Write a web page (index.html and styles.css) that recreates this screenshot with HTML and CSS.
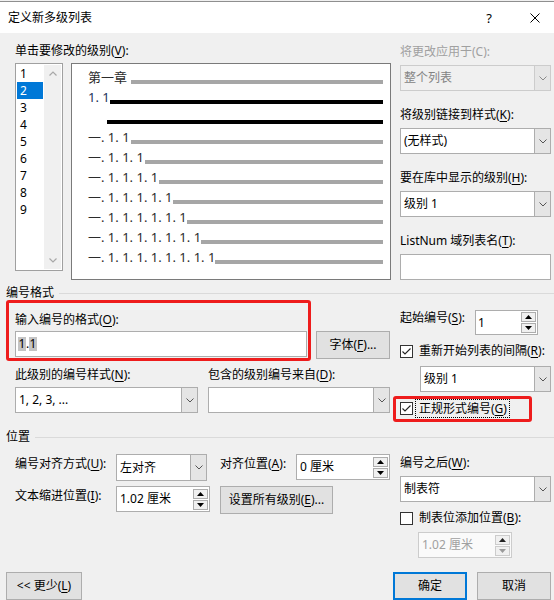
FILE: index.html
```html
<!DOCTYPE html>
<html lang="zh-CN">
<head>
<meta charset="utf-8">
<title>定义新多级列表</title>
<link rel="stylesheet" href="styles.css">
</head>
<body>
<div class="dialog">
  <header class="titlebar">
    <span class="title">定义新多级列表</span>
    <span class="help">?</span>
    <svg class="close" width="10" height="10" viewBox="0 0 10 10"><path d="M0.5 0.5 L9.5 9.5 M9.5 0.5 L0.5 9.5" stroke="#000" stroke-width="1" fill="none"/></svg>
  </header>

  <section class="top">
    <div class="levels">
      <div class="lbl lbl-top">单击要修改的级别(<u>V</u>):</div>
      <div class="levels-row">
        <div class="levellist">
          <ul class="items">
            <li>1</li><li class="sel">2</li><li>3</li><li>4</li><li>5</li><li>6</li><li>7</li><li>8</li><li>9</li>
          </ul>
          <div class="vscroll">
            <span class="arr"><svg width="8" height="5" viewBox="0 0 8 5"><polyline points="0.5,4.5 4,1 7.5,4.5" fill="none" stroke="#a8a8a8" stroke-width="1.2"/></svg></span>
            <span class="arr"><svg width="8" height="5" viewBox="0 0 8 5"><polyline points="0.5,0.5 4,4 7.5,0.5" fill="none" stroke="#a8a8a8" stroke-width="1.2"/></svg></span>
          </div>
        </div>
        <div class="preview">
          <div class="pv-row"><span class="pv-text w1">第一章</span><span class="bar"></span></div>
          <div class="pv-row"><span class="pv-text w2 cur">1. 1</span><span class="bar dark"></span></div>
          <div class="pv-row"><span class="pv-text w2b"></span><span class="bar dark"></span></div>
          <div class="pv-row"><span class="pv-text w3">一. 1. 1</span><span class="bar"></span></div>
          <div class="pv-row"><span class="pv-text w4">一. 1. 1. 1</span><span class="bar"></span></div>
          <div class="pv-row"><span class="pv-text w5">一. 1. 1. 1. 1</span><span class="bar"></span></div>
          <div class="pv-row"><span class="pv-text w6">一. 1. 1. 1. 1. 1</span><span class="bar"></span></div>
          <div class="pv-row"><span class="pv-text w7">一. 1. 1. 1. 1. 1. 1</span><span class="bar"></span></div>
          <div class="pv-row"><span class="pv-text w8">一. 1. 1. 1. 1. 1. 1. 1</span><span class="bar"></span></div>
          <div class="pv-row"><span class="pv-text w9">一. 1. 1. 1. 1. 1. 1. 1. 1</span><span class="bar"></span></div>
        </div>
      </div>
    </div>

    <div class="side">
      <div class="field">
        <div class="lbl disabled">将更改应用于(C):</div>
        <div class="combo disabled"><span class="val">整个列表</span><span class="drop"><svg width="8" height="5" viewBox="0 0 8 5"><polyline points="0.5,0.5 4,4 7.5,0.5" fill="none" stroke="#8a8a8a" stroke-width="1"/></svg></span></div>
      </div>
      <div class="field">
        <div class="lbl">将级别链接到样式(<u>K</u>):</div>
        <div class="combo"><span class="val">(无样式)</span><span class="drop"><svg width="8" height="5" viewBox="0 0 8 5"><polyline points="0.5,0.5 4,4 7.5,0.5" fill="none" stroke="#555" stroke-width="1"/></svg></span></div>
      </div>
      <div class="field">
        <div class="lbl">要在库中显示的级别(<u>H</u>):</div>
        <div class="combo"><span class="val">级别 1</span><span class="drop"><svg width="8" height="5" viewBox="0 0 8 5"><polyline points="0.5,0.5 4,4 7.5,0.5" fill="none" stroke="#555" stroke-width="1"/></svg></span></div>
      </div>
      <div class="field">
        <div class="lbl">ListNum 域列表名(<u>T</u>):</div>
        <div class="edit"></div>
      </div>
    </div>
  </section>

  <div class="group-title first"><span>编号格式</span></div>

  <section class="format">
    <div class="fmt-left">
      <div class="lbl lbl-fmt">输入编号的格式(<u>O</u>):</div>
      <div class="fmt-input-row">
        <div class="edit fmt-edit"><span class="fld">1</span>.<span class="fld">1</span></div>
        <button class="btn font-btn">字体(<u>F</u>)...</button>
      </div>
      <div class="fmt-combos">
        <div class="fc fc-1">
          <div class="lbl lbl-fc">此级别的编号样式(<u>N</u>):</div>
          <div class="combo"><span class="val">1, 2, 3, ...</span><span class="drop"><svg width="8" height="5" viewBox="0 0 8 5"><polyline points="0.5,0.5 4,4 7.5,0.5" fill="none" stroke="#555" stroke-width="1"/></svg></span></div>
        </div>
        <div class="fc fc-2">
          <div class="lbl lbl-fc">包含的级别编号来自(<u>D</u>):</div>
          <div class="combo"><span class="val"></span><span class="drop"><svg width="8" height="5" viewBox="0 0 8 5"><polyline points="0.5,0.5 4,4 7.5,0.5" fill="none" stroke="#555" stroke-width="1"/></svg></span></div>
        </div>
      </div>
    </div>

    <div class="fmt-right">
      <div class="start-row">
        <span class="lbl start-lbl">起始编号(<u>S</u>):</span>
        <div class="spin start-spin">
          <span class="val">1</span>
          <span class="btns">
            <span class="sb"><svg width="7" height="4" viewBox="0 0 7 4"><polygon points="0,4 3.5,0 7,4" fill="#000"/></svg></span>
            <span class="sb"><svg width="7" height="4" viewBox="0 0 7 4"><polygon points="0,0 7,0 3.5,4" fill="#000"/></svg></span>
          </span>
        </div>
      </div>
      <div class="check restart">
        <span class="box"><svg width="11" height="11" viewBox="0 0 11 11"><polyline points="1.5,5.5 4,8 9.5,2.5" fill="none" stroke="#222" stroke-width="1.1"/></svg></span>
        <span>重新开始列表的间隔(<u>R</u>):</span>
      </div>
      <div class="combo restart-combo"><span class="val">级别 1</span><span class="drop"><svg width="8" height="5" viewBox="0 0 8 5"><polyline points="0.5,0.5 4,4 7.5,0.5" fill="none" stroke="#555" stroke-width="1"/></svg></span></div>
      <div class="check legal">
        <span class="box"><svg width="11" height="11" viewBox="0 0 11 11"><polyline points="1.5,5.5 4,8 9.5,2.5" fill="none" stroke="#222" stroke-width="1.1"/></svg></span>
        <span class="focus">正规形式编号(<u>G</u>)</span>
      </div>
    </div>
  </section>

  <div class="group-title"><span>位置</span></div>

  <section class="position">
    <div class="pos-left">
      <span class="lbl pl">编号对齐方式(<u>U</u>):</span>
      <div class="combo align-combo"><span class="val">左对齐</span><span class="drop"><svg width="8" height="5" viewBox="0 0 8 5"><polyline points="0.5,0.5 4,4 7.5,0.5" fill="none" stroke="#555" stroke-width="1"/></svg></span></div>
      <span class="lbl pl c4">对齐位置(<u>A</u>):</span>
      <div class="spin c5">
        <span class="val">0 厘米</span>
        <span class="btns">
          <span class="sb"><svg width="7" height="4" viewBox="0 0 7 4"><polygon points="0,4 3.5,0 7,4" fill="#000"/></svg></span>
          <span class="sb"><svg width="7" height="4" viewBox="0 0 7 4"><polygon points="0,0 7,0 3.5,4" fill="#000"/></svg></span>
        </span>
      </div>
      <span class="lbl pl">文本缩进位置(<u>I</u>):</span>
      <div class="spin">
        <span class="val">1.02 厘米</span>
        <span class="btns">
          <span class="sb"><svg width="7" height="4" viewBox="0 0 7 4"><polygon points="0,4 3.5,0 7,4" fill="#000"/></svg></span>
          <span class="sb"><svg width="7" height="4" viewBox="0 0 7 4"><polygon points="0,0 7,0 3.5,4" fill="#000"/></svg></span>
        </span>
      </div>
      <button class="btn setall">设置所有级别(<u>E</u>)...</button>
    </div>

    <div class="pos-right">
      <div class="lbl lbl-after">编号之后(<u>W</u>):</div>
      <div class="combo"><span class="val">制表符</span><span class="drop"><svg width="8" height="5" viewBox="0 0 8 5"><polyline points="0.5,0.5 4,4 7.5,0.5" fill="none" stroke="#555" stroke-width="1"/></svg></span></div>
      <div class="check tabpos">
        <span class="box"></span>
        <span>制表位添加位置(<u>B</u>):</span>
      </div>
      <div class="spin disabled tab-spin">
        <span class="val">1.02 厘米</span>
        <span class="btns">
          <span class="sb"><svg width="7" height="4" viewBox="0 0 7 4"><polygon points="0,4 3.5,0 7,4" fill="#222"/></svg></span>
          <span class="sb"><svg width="7" height="4" viewBox="0 0 7 4"><polygon points="0,0 7,0 3.5,4" fill="#9a9a9a"/></svg></span>
        </span>
      </div>
    </div>
  </section>

  <footer class="buttons">
    <button class="btn more">&lt;&lt; 更少(<u>L</u>)</button>
    <button class="btn ok">确定</button>
    <button class="btn cancel">取消</button>
  </footer>

  <div class="mark mark-format"></div>
  <div class="mark mark-legal"></div>
</div>
</body>
</html>
```

FILE: styles.css
```css
* { box-sizing: border-box; }
html, body { margin: 0; padding: 0; }
body {
  background: #f0f0f0;
  font-family: "Noto Sans", "Noto Sans CJK SC", sans-serif;
  font-size: 12px;
  line-height: 16px;
  color: #000;
}
u { text-decoration: underline; text-underline-offset: 2px; }

.dialog {
  position: relative;
  width: 554px;
  height: 600px;
  overflow: hidden;
  background: #f0f0f0;
}

/* title bar */
.titlebar {
  display: flex;
  align-items: center;
  height: 32px;
  margin-top: 1px;
  border-top: 1px solid #8f8f8f;
  background: #fff;
}
.title { flex: 1; padding-left: 8px; }
.help { width: 40px; text-align: center; font-size: 13px; }
.close { display: block; margin-left: 21px; margin-right: 14px; }

/* top section */
.top {
  display: flex;
  height: 247px;
  padding: 10px 0 0 15px;
}
.lbl { height: 16px; white-space: nowrap; }
.lbl.disabled { color: #a0a0a0; }
.lbl-top { margin-bottom: 4px; }
.levels-row { display: flex; gap: 8px; align-items: flex-start; }

.levellist {
  display: flex;
  width: 48px;
  height: 208px;
  padding: 1px;
  border: 1px solid #a0a0a0;
  background: #fff;
}
.items {
  list-style: none;
  margin: 0 1px 0 0;
  padding: 0;
  width: 26px;
}
.items li { height: 17px; line-height: 17px; padding-left: 3px; }
.items li.sel { background: #0078d7; color: #fff; }
.vscroll {
  width: 17px;
  background: #f0f0f0;
  display: flex;
  flex-direction: column;
  justify-content: space-between;
}
.vscroll .arr {
  height: 17px;
  display: flex;
  align-items: center;
  justify-content: center;
}

.preview {
  width: 320px;
  height: 217px;
  padding: 2px 7px 0 16px;
  border: 1px solid #7a7a7a;
  background: #fff;
}
.pv-row { display: flex; align-items: flex-end; height: 20px; }
.pv-text {
  flex: none;
  font-size: 13px;
  line-height: 14px;
  margin-bottom: 2px;
  white-space: nowrap;
  color: #2b2b2b;
}
.pv-text.cur { color: #23325a; }
.w1 { width: 43px; }
.w2 { width: 22px; }
.w2b { width: 19px; }
.w3 { width: 43px; }
.w4 { width: 57px; }
.w5 { width: 71px; }
.w6 { width: 85px; }
.w7 { width: 99px; }
.w8 { width: 113px; }
.w9 { width: 127px; }
.bar { flex: 1; height: 4px; margin-bottom: 2px; background: #a6a6a6; }
.bar.dark { background: #000; }

.side { width: 151px; margin-left: 9px; padding-top: 1px; }
.side .field { margin-bottom: 16px; }
.side .lbl { margin-bottom: 5px; }

/* controls */
.combo {
  display: flex;
  height: 26px;
  border: 1px solid #adadad;
  background: #fff;
}
.combo .val {
  flex: 1;
  padding-left: 3px;
  line-height: 24px;
  white-space: nowrap;
  overflow: hidden;
}
.combo .drop {
  width: 16px;
  border-left: 1px solid #adadad;
  background: #e5e5e5;
  display: flex;
  align-items: center;
  justify-content: center;
}
.combo.disabled { background: #f0f0f0; border-color: #cccccc; color: #838383; }
.combo.disabled .drop { background: #e6e6e6; border-left-color: #cccccc; }

.edit {
  height: 26px;
  border: 1px solid #adadad;
  background: #fff;
}

.spin {
  display: flex;
  height: 26px;
  border: 1px solid #adadad;
  background: #fff;
}
.spin .val { flex: 1; padding-left: 3px; line-height: 24px; white-space: nowrap; }
.spin .btns {
  width: 15px;
  margin-right: 1px;
  display: flex;
  flex-direction: column;
  justify-content: center;
  gap: 1px;
}
.spin .sb {
  height: 10px;
  border: 1px solid #adadad;
  background: #f0f0f0;
  display: flex;
  align-items: center;
  justify-content: center;
}
.spin.disabled { border-color: #cccccc; color: #a0a0a0; background: #fafafa; }
.spin.disabled .sb { border-color: #cccccc; }

.btn {
  font: inherit;
  color: #000;
  padding: 0;
  height: 28px;
  border: 1px solid #adadad;
  background: #e1e1e1;
  white-space: nowrap;
}

.check { display: flex; align-items: center; height: 16px; white-space: nowrap; }
.check .box {
  flex: none;
  width: 13px;
  height: 13px;
  margin-right: 6px;
  border: 1px solid #333;
  background: #fff;
  display: flex;
  align-items: center;
  justify-content: center;
}

/* group titles */
.group-title {
  display: flex;
  align-items: center;
  height: 16px;
  padding-left: 6px;
}
.group-title.first { margin-top: 5px; }
.group-title::after {
  content: "";
  flex: 1;
  height: 1px;
  margin-left: 5px;
  background: #dadada;
}

/* numbering format */
.format { display: flex; height: 128px; padding-left: 15px; }
.fmt-left { width: 375px; padding-top: 11px; }
.lbl-fmt { margin-bottom: 3px; }
.fmt-input-row { display: flex; gap: 9px; align-items: flex-start; height: 28px; }
.fmt-edit { width: 292px; padding: 5px 0 0 2px; line-height: 14px; }
.fld { display: inline-block; background: #c4c4c4; padding: 0 0.5px; }
.font-btn { width: 74px; }
.fmt-combos { display: flex; gap: 10px; margin-top: 8px; }
.fc-1 { width: 183px; }
.fc-2 { width: 182px; }
.lbl-fc { margin-bottom: 4px; }

.fmt-right { width: 151px; margin-left: 10px; padding-top: 9px; }
.start-row { display: flex; align-items: flex-start; height: 25px; }
.start-lbl { width: 75px; }
.start-spin { width: 63px; height: 25px; }
.start-spin .val { line-height: 23px; padding-left: 2px; }
.check.restart { margin-top: 8px; }
.restart-combo { width: 131px; margin: 7px 0 0 20px; }
.check.legal { height: 19px; margin-top: 7px; }
.check.legal .box { margin-right: 2px; }
.focus {
  border: 1px dotted #000;
  padding: 1px 2px 1px 3px;
  line-height: 15px;
}

/* position */
.position { display: flex; height: 127px; padding-left: 15px; }
.pos-left {
  width: 375px;
  padding-top: 9px;
  display: grid;
  grid-template-columns: 101px 94px 10px 76px 94px;
  grid-template-rows: 27px 28px;
  row-gap: 5px;
  align-content: start;
  align-items: start;
}
.pl { padding-top: 2px; height: auto; }
.c4 { grid-column: 4; }
.c5 { grid-column: 5; }
.align-combo { width: 91px; height: 27px; }
.align-combo .val { line-height: 25px; }
.setall { grid-column: 4 / span 2; width: 113px; }

.pos-right { width: 151px; margin-left: 10px; padding-top: 10px; }
.lbl-after { margin-bottom: 5px; }
.check.tabpos { margin-top: 8px; }
.tab-spin { width: 94px; margin: 6px 0 0 18px; }

/* footer buttons */
.buttons { display: flex; gap: 10px; padding: 0 3px 0 6px; }
.more { width: 76px; }
.ok { width: 74px; margin-left: auto; border: 2px solid #0078d7; }
.cancel { width: 74px; }

/* red annotation marks over the screenshot */
.mark {
  position: absolute;
  border: 3px solid #ee1c1c;
  border-radius: 3px;
  pointer-events: none;
}
.mark-format { left: 6px; top: 300px; width: 305px; height: 61px; }
.mark-legal { left: 393px; top: 396px; width: 139px; height: 26px; }
```
